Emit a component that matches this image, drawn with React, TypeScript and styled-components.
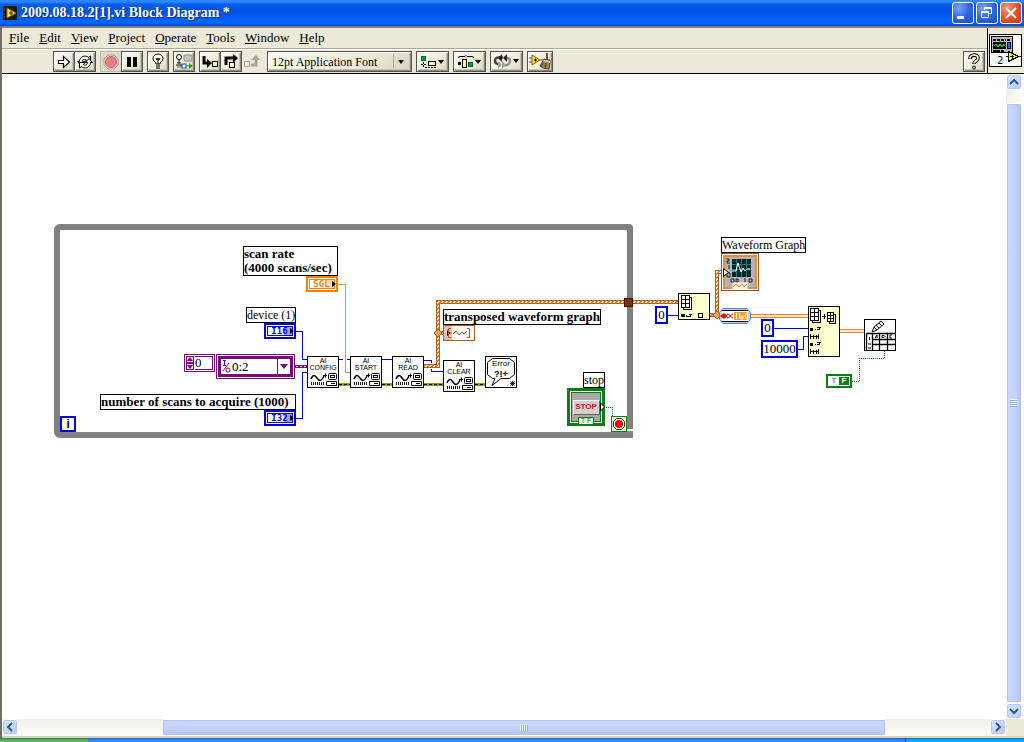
import React from "react";
import styled, { createGlobalStyle, css } from "styled-components";

const serif = '"Liberation Serif", "Times New Roman", serif';
const sans = '"Liberation Sans", Arial, sans-serif';
const face = "#ece9d8";
const blue = "#0000d8";
const purple = "#7a0a7a";
const orange = "#ff8000";
const brown = "#b45a1e";
const green = "#0a7d14";

/* Scroll offset of the diagram inside its pane. */
const scroll = { x: 2, y: 74 };

const GlobalStyle = createGlobalStyle`
  * { box-sizing: border-box; }
  body { margin: 0; background: ${face}; font-family: ${serif}; color: #000; }
  button, input, select { font: inherit; color: inherit; margin: 0; padding: 0; border: 0; background: none; }
  svg { display: block; flex: none; }
`;

const Frame = styled.div`
  display: flex;
  flex-direction: column;
  height: 100vh;
  overflow: hidden;
`;

const TitleBar = styled.header`
  display: flex;
  align-items: center;
  gap: 4px;
  flex: none;
  height: 26px;
  padding: 0 2px 0 3px;
  background: linear-gradient(#2f86f8 0, #2f86f8 2px, #0a5fee 4px, #0054e3 10px, #0058ee 16px, #0066ff 21px, #0060fa 24px, #003fc8 26px);
`;

const Title = styled.h1`
  flex: 1;
  margin: 0;
  font-size: 14px;
  line-height: 18px;
  font-weight: bold;
  color: #fff;
  text-shadow: 1px 1px 1px #0a2a80;
  white-space: nowrap;
`;

const CaptionButtons = styled.div`
  display: flex;
  gap: 2px;
`;

const CaptionButton = styled.button<{ $close?: boolean }>`
  width: 22px;
  height: 22px;
  border: 1px solid #fff;
  border-radius: 3px;
  background: ${(p) =>
    p.$close
      ? "radial-gradient(circle at 30% 25%, #f0a080, #e2522c 50%, #c23a14)"
      : "radial-gradient(circle at 30% 25%, #7ca4f4, #2f66e0 50%, #1a49c4)"};
`;

const Window = styled.main`
  display: flex;
  flex-direction: column;
  flex: 1;
  min-height: 0;
  border-top: 2px solid #827f76;
  border-left: 2px solid #716f64;
`;

const Bars = styled.div`
  display: flex;
  flex: none;
  height: 46px;
  background: ${face};
  border-bottom: 1px solid #000;
`;

const BarStack = styled.div`
  flex: 1;
  border-right: 1px solid #000;
`;

const MenuBar = styled.nav`
  display: flex;
  height: 21px;
  padding-left: 2px;
  border-bottom: 1px solid #aca899;
`;

const MenuItem = styled.button`
  padding: 0 5px;
  font-size: 13px;
  line-height: 20px;

  &::first-letter { text-decoration: underline; }
`;

const ToolBar = styled.div`
  display: flex;
  gap: 4px;
  height: 24px;
  padding: 1px 2px 0 51px;
  border-top: 1px solid #fff;
`;

const Group = styled.div`
  display: flex;

  > * + * { margin-left: -1px; }
`;

const raised = css`
  border: 1px solid #55534a;
  background: linear-gradient(135deg, #fbfaf2, #eeebd9 60%, #d8d5c4);
  box-shadow: inset 1px 1px #fff, inset -1px -1px #8f8c7e, inset -2px -2px #c6c3b2;
`;

const ToolButton = styled.button<{ $w?: number; $flat?: boolean; $dim?: boolean }>`
  display: flex;
  align-items: center;
  justify-content: center;
  flex: none;
  width: ${(p) => p.$w ?? 22}px;
  height: 21px;
  ${raised}
  ${(p) => p.$dim && css`border-color: #bdb9a8; background: #dfdbca; box-shadow: none;`}
  ${(p) => p.$flat && css`border-color: transparent; background: none; box-shadow: none;`}
`;

const FontPicker = styled.div`
  position: relative;
  width: 145px;
  height: 21px;
  ${raised}

  select {
    appearance: none;
    width: 100%;
    height: 19px;
    padding-left: 4px;
    font-size: 12px;
    outline: none;
  }

  svg {
    position: absolute;
    right: 1px;
    top: 1px;
    pointer-events: none;
  }
`;

const Spacer = styled.div`
  flex: 1;
`;

const IconPane = styled.div`
  display: flex;
  width: 36px;
  padding: 6px 0 0 1px;
`;

const Work = styled.div`
  display: grid;
  grid-template: minmax(0, 1fr) 17px / minmax(0, 1fr) 18px;
  flex: 1;
  min-height: 0;
  background: ${face};
  border-bottom: 2px solid #d6d2c2;
`;

const Canvas = styled.section`
  position: relative;
  overflow: hidden;
  background: #fff;
`;

const ScrollTrack = styled.div<{ $vertical?: boolean }>`
  display: flex;
  flex-direction: ${(p) => (p.$vertical ? "column" : "row")};
  padding: ${(p) => (p.$vertical ? "0 2px 0 0" : "0")};
  background: linear-gradient(${(p) => (p.$vertical ? "90deg" : "180deg")}, #f1f0e8, #fefefb);
`;

const ScrollButton = styled.button`
  display: flex;
  align-items: center;
  justify-content: center;
  flex: none;
  width: 16px;
  height: 16px;
  border: 1px solid #fff;
  border-radius: 3px;
  background: linear-gradient(135deg, #dbe6ff, #b5c9f8);
  box-shadow: inset 0 0 0 1px #b4c8f6;
`;

const Thumb = styled.div<{ $vertical?: boolean }>`
  display: flex;
  align-items: center;
  justify-content: center;
  min-width: 0;
  min-height: 0;
  border: 1px solid #fff;
  border-radius: 2px;
  background: linear-gradient(${(p) => (p.$vertical ? "90deg" : "180deg")}, #cbd9fe, #c4d2fb 60%, #b2c4f2);
  box-shadow: inset 0 0 0 1px #b0c3f2;
`;

const Span = styled.div<{ $grow: number }>`
  display: grid;
  flex: ${(p) => p.$grow} 1 0;
  min-width: 0;
  min-height: 0;
`;

const TaskBar = styled.footer`
  display: flex;
  flex: none;
  height: 4px;
  background: linear-gradient(#1f5fd0, #3a8af0 2px);
`;

const StartEdge = styled.div`
  width: 88px;
  background: linear-gradient(#2c7a2c, #5fb65f 2px);
`;

const TrayEdge = styled.div`
  width: 119px;
  margin-left: auto;
  border-left: 1px solid #0a3a90;
  background: linear-gradient(#0b6fc8, #16a8f0 2px);
`;

/* ---- Parts on the diagram ---- */

interface Place { $x: number; $y: number; $w?: number; $h?: number }

const Placed = styled.div<Place>`
  position: absolute;
  left: ${(p) => p.$x - scroll.x}px;
  top: ${(p) => p.$y - scroll.y}px;
  width: ${(p) => (p.$w ? `${p.$w}px` : "auto")};
  height: ${(p) => (p.$h ? `${p.$h}px` : "auto")};
`;

const WireLayer = styled.svg`
  position: absolute;
  inset: 0;
  width: 100%;
  height: 100%;
`;

const Loop = styled(Placed)`
  border: 6px solid #808080;
  border-radius: 6px 4px 0 6px;
`;

const Caption = styled(Placed)<{ $bold?: boolean }>`
  border: 1px solid #000;
  background: #fff;
  font-size: ${(p) => (p.$bold ? 13 : 12)}px;
  font-weight: ${(p) => (p.$bold ? "bold" : "normal")};
  line-height: 14px;
  white-space: nowrap;
`;

const Terminal = styled(Placed)<{ $color: string; $tint: string }>`
  display: flex;
  align-items: center;
  padding: 1px;
  border: 2px solid ${(p) => p.$color};
  background: #fff;
  color: ${(p) => p.$color};

  > span {
    flex: 1;
    height: 10px;
    padding-right: 1px;
    border: 1px solid ${(p) => p.$color};
    background: linear-gradient(90deg, transparent 65%, ${(p) => p.$tint} 65%);
    font: bold 9px/8px "DejaVu Sans Mono", monospace;
    text-align: center;
  }

  > svg { position: absolute; right: 0; top: 3px; }
`;

const Constant = styled(Placed)`
  border: 2px solid ${blue};
  background: #fff;

  input {
    display: block;
    width: 100%;
    height: 100%;
    font-size: 13px;
    text-align: center;
    outline: none;
  }
`;

const IndexBox = styled(Placed)`
  display: flex;
  gap: 1px;
  padding: 1px;
  border: 1px solid ${purple};
  background: #fff;

  input {
    flex: 1;
    min-width: 0;
    border: 1px solid ${purple};
    border-left: 0;
    font-size: 13px;
    outline: none;
  }
`;

const Spinner = styled.div`
  display: flex;
  flex-direction: column;
  justify-content: space-between;
  width: 8px;
  background: #f0d8f0;

  button {
    height: 7px;
    border: 1px solid ${purple};
  }
`;

const ChannelBox = styled(Placed)`
  padding: 1px;
  border: 1px solid ${purple};
  background: #fff;
`;

const ChannelInner = styled.div`
  display: flex;
  align-items: center;
  position: relative;
  height: 21px;
  border: 3px solid ${purple};

  select {
    appearance: none;
    width: 100%;
    height: 15px;
    padding-left: 11px;
    font-size: 13px;
    line-height: 15px;
    outline: none;
  }

  svg { position: absolute; top: 0; pointer-events: none; }
  svg:first-child { left: 1px; }
  svg:last-child { right: 0; }
`;

const StopTerminal = styled(Placed)`
  display: flex;
  align-items: center;
  justify-content: center;
  border: 3px solid ${green};
  background: #a8a8a8;
  box-shadow: inset 0 0 0 1px #fff, inset 0 0 0 2px ${green};

  button {
    width: 27px;
    height: 15px;
    border: 1px solid #777;
    border-color: #f4f4f4 #666 #666 #f4f4f4;
    background: #d4d0d0;
    color: #c8102c;
    font: bold 8px/12px ${sans};
  }
`;

const TypeTag = styled.span`
  position: absolute;
  bottom: -2px;
  left: 8px;
  width: 16px;
  height: 8px;
  border: 1px solid ${green};
  background: #e8fbe8;
  color: ${green};
  font: 7px/6px ${sans};
  text-align: center;
`;

const Counter = styled(Placed)`
  border: 2px solid ${blue};
  background: #ffffc8;
  color: ${blue};
  font: bold 13px/12px ${sans};
  text-align: center;
`;

const BoolConstant = styled(Placed)`
  display: grid;
  grid-template-columns: 1fr 1fr;
  padding: 1px;
  border: 2px solid ${green};
  background: #fff;
  color: #6aa86a;
  font: bold 8px/8px ${sans};
  text-align: center;

  b { background: ${green}; color: #fff; }
`;

/* ---- Drawings ---- */

const AppIcon = () => (
  <svg width="14" height="14" viewBox="0 0 14 14">
    <rect width="14" height="14" fill="#1a1a10" />
    <path d="M0 2h2M0 4h2M0 8h2M0 11h2" stroke="#d03020" />
    <path d="M4 2l9 5-9 5z" fill="#ffe83c" stroke="#8a6a00" />
    <path d="M6 7h4M8 5v4" stroke="#302000" />
  </svg>
);

const Drop = ({ x, y }: { x: number; y: number }) => <path d={`M${x} ${y}h6l-3 4z`} fill="#000" />;

const RunIcon = () => (
  <svg width="16" height="16" viewBox="0 0 16 16">
    <path d="M2.500 6.500h5V2.500l6 5.500-6 5.500v-4h-5z" fill="#fff" stroke="#000" strokeWidth="1.200" />
  </svg>
);

const RepeatIcon = () => (
  <svg width="18" height="16" viewBox="0 0 18 16" fill="#fff" stroke="#000">
    <path d="M1.500 7.500h2c0-5 6-7 9-4l2-1.500v6h-6l2-2c-2-1.500-4-.5-4 1.500h2l-3.500 4z" />
    <path d="M16.500 8.500h-2c0 5-6 7-9 4l-2 1.500V8.500h5.500l-1.500 2c2 1.500 4 .5 4-2h-2l3.500-4z" />
  </svg>
);

const AbortIcon = () => (
  <svg width="16" height="16" viewBox="0 0 16 16">
    <path d="M5 1h6l4 4v6l-4 4H5l-4-4V5z" fill="#f4cfc8" stroke="#b09a90" />
    <circle cx="8" cy="8" r="5.500" fill="#e88080" stroke="#b87070" />
  </svg>
);

const PauseIcon = () => (
  <svg width="12" height="12" viewBox="0 0 12 12"><path d="M1 1h4v10H1zM7 1h4v10H7z" /></svg>
);

const BulbIcon = () => (
  <svg width="14" height="17" viewBox="0 0 14 17" fill="none" stroke="#000">
    <path d="M5 11C5 9 2 8 2 5.500a5 4.500 0 0 1 10 0C12 8 9 9 9 11z" fill="#fffbe0" />
    <path d="M5 5l1 2 1-2 1 2 1-2M7 7v4M5 13h4M5 15h4" />
  </svg>
);

const RetainIcon = () => (
  <svg width="18" height="17" viewBox="0 0 18 17" fill="none">
    <circle cx="4" cy="4" r="2.500" stroke="#000" fill="#fff" />
    <path d="M4 6v4M1 12h6M2 10h4" stroke="#000" />
    <rect x="9" y="2" width="8" height="6" rx="1" fill="#c8c8c0" stroke="#888" />
    <path d="M2 14h4v-2M11 13h5" stroke="#18901c" />
    <rect x="7" y="11" width="4" height="4" stroke="#1040c0" fill="#fff" />
    <path d="M14 10l4 3-4 3z" fill="#20a020" />
  </svg>
);

const StepIntoIcon = () => (
  <svg width="17" height="15" viewBox="0 0 17 15">
    <path d="M2 2v7h5" fill="none" stroke="#000" strokeWidth="3" />
    <path d="M5 5l5 4-5 5z" />
    <rect x="10.500" y="7.500" width="5" height="5" fill="#ffffb0" stroke="#000" />
  </svg>
);

const StepOverIcon = () => (
  <svg width="17" height="16" viewBox="0 0 17 16">
    <path d="M3 11V4h8" fill="none" stroke="#000" strokeWidth="3" />
    <path d="M10 0l5 4-5 5z" />
    <rect x="6.500" y="8.500" width="5" height="5" fill="#ffffb0" stroke="#000" />
  </svg>
);

const StepOutIcon = () => (
  <svg width="18" height="15" viewBox="0 0 18 15">
    <rect x="1.500" y="7.500" width="5" height="5" fill="none" stroke="#a8a598" />
    <path d="M8 11h5V5" fill="none" stroke="#a8a598" strokeWidth="3" />
    <path d="M8 6l5-5 4 5z" fill="#a8a598" />
  </svg>
);

const AlignIcon = () => (
  <svg width="26" height="14" viewBox="0 0 26 14">
    <rect x="1.500" y="1.500" width="4" height="4" fill="#1a9a3a" stroke="#063" />
    <path d="M1 9.500h5M3.500 7v5M5 12.500h12" stroke="#000" strokeDasharray="2 1" />
    <rect x="8.500" y="6.500" width="7" height="4" fill="#ffffa0" stroke="#000" />
    <Drop x={18} y={5} />
  </svg>
);

const DistributeIcon = () => (
  <svg width="26" height="14" viewBox="0 0 26 14">
    <path d="M1 2.500l2-1h5l1-1 1 1h5l2 1" stroke="#000" fill="none" />
    <rect x="1" y="7" width="3" height="3" />
    <rect x="5.500" y="4.500" width="4" height="8" fill="#ffffa0" stroke="#000" />
    <rect x="11.500" y="7.500" width="4" height="4" fill="#1a9a3a" stroke="#063" />
    <Drop x={18} y={5} />
  </svg>
);

const ReorderIcon = () => (
  <svg width="28" height="15" viewBox="0 0 28 15">
    <path d="M10 3.500C5 2.500 2 4 2 6.500s1 3 4 4" fill="none" stroke="#444" strokeWidth="2.500" />
    <path d="M9 11c5 1 8-1 8-4 0-2-2-3-4-3" fill="none" stroke="#909088" strokeWidth="2.500" />
    <path d="M5 4l4-4v8zM10 4l4-4v8z" fill="#222" />
    <path d="M13 10.500L9 7v8zM9 10.500L5 7v8z" fill="#a0a098" />
    <Drop x={20} y={5} />
  </svg>
);

const CleanIcon = () => (
  <svg width="22" height="17" viewBox="0 0 22 17">
    <path d="M0 5h4M0 9h4M9 7h5" stroke="#8020a0" />
    <path d="M3 2l8 5-8 5z" fill="#ffe83c" stroke="#806000" />
    <path d="M5 7h3M6.500 5.500v3" stroke="#000" />
    <path d="M18 0v7" stroke="#7a4820" strokeWidth="2" />
    <path d="M15 6l6 1v3l-1 6c-4 0-7-1-9-3z" fill="#a08050" stroke="#58483a" />
    <path d="M15 7l6 1v2l-7-2z" fill="#d8d4c8" />
    <path d="M14 10l-2 4M17 10l-1 5" stroke="#40382c" />
  </svg>
);

const HelpIcon = () => (
  <svg width="14" height="17" viewBox="0 0 14 17" fill="none">
    <path d="M3 6c0-5 8-5 8-1 0 3-4 3-4 6" stroke="#000" strokeWidth="3.600" />
    <path d="M3 5.500c0-4.500 8-4.500 8-.5 0 3-4 3-4 5.500" stroke="#ffffc0" strokeWidth="1.600" />
    <circle cx="7" cy="14.500" r="1.500" fill="#ffffc0" stroke="#000" />
  </svg>
);

const ViIcon = () => (
  <svg width="33" height="33" viewBox="0 0 33 33" shapeRendering="crispEdges">
    <rect x="0.500" y="0.500" width="32" height="32" fill="#fff" stroke="#000" />
    <rect x="2.500" y="2.500" width="21" height="16" fill="#b8b8b8" stroke="#000" />
    <path d="M4 6h13M18 6h4M4 17h11M6 17h2" stroke="#000" strokeWidth="2" strokeDasharray="3 1" />
    <rect x="4" y="8" width="13" height="7" />
    <path d="M5 12l2-2 2 3 2-3 2 3 2-3 1 2" fill="none" stroke="#18c030" />
    <rect x="18.500" y="8.500" width="3" height="6" fill="#2a6ae0" stroke="#000" />
    <path d="M17 22.500h15" stroke="#000" />
    <path d="M19.500 17.500l10 5-10 5z" fill="#ffff20" stroke="#000" />
    <path d="M21 22.500h4M23 20.500v4" stroke="#000" />
    <text x="8" y="30" fontSize="10" fontFamily="DejaVu Sans, sans-serif">2</text>
  </svg>
);

const Arrow = ({ d }: { d: string }) => (
  <svg width="10" height="10" viewBox="0 0 10 10"><path d={d} fill="none" stroke="#3c5488" strokeWidth="2" /></svg>
);

const Grip = ({ vertical }: { vertical?: boolean }) => (
  <svg width="8" height="8" viewBox="0 0 8 8">
    <g transform={vertical ? "rotate(90 4 4)" : undefined}>
      <path d="M0.500 0v7M2.500 0v7M4.500 0v7M6.500 0v7" stroke="#f2f6ff" />
      <path d="M1.500 1v7M3.500 1v7M5.500 1v7M7.500 1v7" stroke="#98aedc" />
    </g>
  </svg>
);

const DaqIcon = ({ name }: { name: string }) => (
  <svg width="32" height="32" viewBox="0 0 32 32">
    <rect x="0.500" y="0.500" width="31" height="31" fill="#fff" stroke="#000" />
    <g fontFamily="Liberation Sans, Arial, sans-serif" fontSize="7" textAnchor="middle">
      <text x="16" y="7">AI</text>
      <text x="16" y="14">{name}</text>
    </g>
    <path d="M4 23c2-5 4-4 6-1s4 4 7-2" fill="none" stroke="#000" strokeWidth="1.500" />
    <path d="M4.500 26v3M6.500 26v3M8.500 26v3M10.500 26v3M12.500 26v3M14.500 26v3M16.500 26v3" stroke="#000" strokeWidth="0.900" />
    <path d="M16 19.500h4M18.500 17.500v4" stroke="#000" />
    <rect x="21.500" y="17.500" width="8" height="6" rx="1" fill="#fff" stroke="#000" />
    <rect x="23.500" y="19.500" width="4" height="2" fill="none" stroke="#000" />
    <path d="M19.500 25.500h10v4h-10zM24 27.500h4" fill="none" stroke="#000" />
  </svg>
);

const ErrorIcon = () => (
  <svg width="32" height="32" viewBox="0 0 32 32">
    <rect x="0.500" y="0.500" width="31" height="31" fill="#fff" stroke="#000" />
    <path d="M7.500 2.500h17l5 4v12l-5 4H16l-9 7 3-7H7.500l-5-4v-12z" fill="#fff" stroke="#000" />
    <g fontFamily="Liberation Sans, Arial, sans-serif" textAnchor="middle">
      <text x="16" y="10" fontSize="8">Error</text>
      <text x="16" y="21" fontSize="9" fontWeight="bold">?!+</text>
    </g>
    <path d="M25 27.500h5M27.500 25v5M25.500 25.500l4 4M29.500 25.500l-4 4" stroke="#000" strokeWidth="0.800" />
  </svg>
);

const Cells = ({ x, y, s }: { x: number; y: number; s: number }) => (
  <g fill="#fff" stroke="#000">
    <rect x={x + 2.5} y={y + 2.5} width={s * 2} height={s * 3} />
    <rect x={x + 0.5} y={y + 0.5} width={s * 2} height={s * 3} />
    <path d={`M${x + s + 0.5} ${y}v${s * 3}M${x} ${y + s + 0.5}h${s * 2}M${x} ${y + 2 * s + 0.5}h${s * 2}`} />
  </g>
);

const IndexArrayIcon = () => (
  <svg width="32" height="27" viewBox="0 0 32 27" shapeRendering="crispEdges">
    <rect x="0.500" y="0.500" width="31" height="26" fill="#ffffd0" stroke="#000" />
    <Cells x={3} y={2} s={4} />
    <path d="M3 21h4v3H3zM8 22h1v2H8z" />
    <path d="M9 23.500h3v-3M10.500 21.500h3" stroke="#000" fill="none" />
    <rect x="20.500" y="20.500" width="4" height="4" fill="#fff" stroke="#000" />
  </svg>
);

const SubsetIcon = () => (
  <svg width="32" height="51" viewBox="0 0 32 51" shapeRendering="crispEdges">
    <rect x="0.500" y="0.500" width="31" height="50" fill="#ffffd0" stroke="#000" />
    <Cells x={2} y={2} s={4} />
    <Cells x={19} y={6} s={3} />
    <path d="M14 10.500h4M16.500 8v5" stroke="#000" />
    {[23, 38].map((y) => (
      <g key={y} fill="none" stroke="#000">
        <path d={`M2 ${y}h3`} strokeWidth="3" />
        <path d={`M7 ${y}.5h1M9 ${y}.5h2v-3M9 ${y - 2}h4`} />
        <path d={`M2.500 ${y + 5}v5M10.500 ${y + 5}v5M3 ${y + 7}.5h7M5.500 ${y + 6}v4M8.500 ${y + 6}v4`} />
      </g>
    ))}
  </svg>
);

const SpreadsheetIcon = () => (
  <svg width="32" height="32" viewBox="0 0 32 32">
    <rect x="0.500" y="0.500" width="31" height="31" fill="#fff" stroke="#000" />
    <path d="M8 13l2-5 7-6 3 3-7 6zM10 8l3 3M12 6l3 3M15 4l3 3" fill="#fff" stroke="#000" />
    <path d="M2.500 14.500h29M2.500 14.500v17M8.500 14.500v17M8 20.500h23M8 25.500h23M15.500 14v17M23.500 14v17" fill="none" stroke="#000" strokeWidth="1.300" />
    <path d="M11 19l2-3v3M18 16.500h2l1 1-1 1h-2zM28 16h-2v3h2M5.500 18v3M4 25h3M4 29h3" fill="none" stroke="#000" />
  </svg>
);

const GraphIcon = () => (
  <svg width="38" height="38" viewBox="0 0 38 38">
    <rect x="0.500" y="0.500" width="37" height="37" fill="#fff" stroke="#a05020" />
    <rect x="3" y="3" width="32" height="32" fill="#b4b4b4" stroke="#e88a40" strokeWidth="2" />
    <rect x="11" y="6" width="19" height="18" fill="#06282c" />
    <path d="M15.500 6v18M20.500 6v18M25.500 6v18M11 11.500h19M11 16.500h19" stroke="#2a7a80" />
    <path d="M11 18h4l2-8 3 9 2-4 2 3 2-2 3 0" fill="none" stroke="#fff" />
    <path d="M5 6h3v2H6v2h3M8 12v4M6 20h3v4H6zM10 26h3v3h-3zM15 26h2v3h-2zM24 25v4M28 26h3v3h-3z" fill="none" stroke="#222" />
    <path d="M2.500 15.500l5 4-5 4z" fill="#fff" stroke="#000" />
    <rect x="12" y="30" width="14" height="6" fill="#fff0dc" stroke="#fff" />
    <path d="M12 34l3-3 3 3 3-3 2 3 3-3" fill="none" stroke="#f08c30" />
  </svg>
);

const ConvertIcon = () => (
  <svg width="32" height="16" viewBox="0 0 32 16">
    <path d="M4 0.500h24l3.500 4v7l-3.500 4H4l-3.500-4v-7z" fill="#bcd8f4" stroke="#4a86c8" />
    <rect x="3" y="3" width="26" height="10" fill="#fff" />
    <path d="M3 2.500h26M3 13.500h26" stroke="#000" />
    <path d="M5 5l4 3-4 3-4-3z" fill="#f01010" />
    <path d="M8 6c3 0 4 4 6 4M8 10c3 0 4-4 6-4" fill="none" stroke="#601818" />
    <path d="M15 4h13v8H15z" fill="#ff9a30" />
    <path d="M17.500 5v6M20.500 5v6M22 8h2v3h-2zM27 5l-1 3 1 3" fill="none" stroke="#fff" />
  </svg>
);

const ArrayTerminalIcon = () => (
  <svg width="32" height="16" viewBox="0 0 32 16">
    <rect x="0.500" y="0.500" width="31" height="15" fill="#fff" stroke={brown} />
    <rect x="1" y="1" width="8" height="14" fill="#e0c0b4" />
    <path d="M4 5l4 3-4 3z" />
    <path d="M8 3.500H5.500v9H8M24 3.500h2.500v9H24M10 9l3-3 3 4 3-3 2 2 3-3" fill="none" stroke={brown} />
  </svg>
);

const StopConditionIcon = () => (
  <svg width="16" height="16" viewBox="0 0 16 16">
    <rect x="0.500" y="0.500" width="15" height="15" fill="#e8f8c8" stroke={green} />
    <path d="M5.500 2.500h5l3 3v5l-3 3h-5l-3-3v-5z" fill="#fff" stroke="#333" />
    <circle cx="8" cy="8" r="4" fill="#f00000" />
  </svg>
);

const InputArrow = () => (
  <svg width="5" height="6" viewBox="0 0 5 6"><path d="M1 0l4 3-4 3z" fill="#000" /></svg>
);

const arrayWires = [
  "M424 366H438V302H678",
  "M438 333H443",
  "M710 315H720",
  "M717 315V272H723",
];

const Wires = () => (
  <WireLayer shapeRendering="crispEdges" aria-hidden="true">
    <defs>
      <pattern id="hatch" width="4" height="4" patternUnits="userSpaceOnUse">
        <rect width="4" height="4" fill="#e08030" />
        <path d="M0 3h1v1H0zM1 2h1v1H1zM2 1h1v1H2zM3 0h1v1H3zM1 3h1v1H1zM2 2h1v1H2zM3 1h1v1H3zM0 0h1v1H0z" fill="#fff" />
      </pattern>
    </defs>
    <g transform={`translate(${-scroll.x} ${-scroll.y})`} fill="none">
      <g stroke={blue}>
        <path d="M295 331.500H302.500V359.500H307M295 418.500H302.500V372.500H307M339 359.500H343M347 359.500H350M382 359.500H392M424 360.500H431.500V363M431.500 369V371.500H443" />
        <path d="M667 315.500H678M773 328.500H808M797 349.500H803.500V336.500H808" />
      </g>
      <path d="M337 284.500H345.500V372.500H350" stroke="#f09030" />
      <path d="M751 316H808M840 331H864" stroke="#f08030" strokeWidth="4" />
      <path d="M751 316H808M840 331H864" stroke="#ffe8d0" strokeWidth="2" />
      <g strokeWidth="3">
        <path d="M339 384.500H350M382 384.500H392M424 384.500H443M475 384.500H485" stroke="#9a9a00" />
        <path d="M339 384.500H350M382 384.500H392M424 384.500H443M475 384.500H485" stroke="#000" strokeWidth="1" strokeDasharray="3 2" />
        <path d="M295 366.500H307" stroke={purple} />
        <path d="M296 366.500H307" stroke="#fff" strokeWidth="1" strokeDasharray="2 2" />
      </g>
      {arrayWires.map((d) => (
        <g key={d}>
          <path d={d} stroke="#b85c14" strokeWidth="4" />
          <path d={d} stroke="url(#hatch)" strokeWidth="2" />
        </g>
      ))}
      <path d="M438 329l4 4-4 4-4-4zM717 311l4 4-4 4-4-4z" fill="#f0a050" stroke="#b85c14" />
      <path d="M624.500 298.500h8v8h-8z" fill="#7a3008" stroke="#401800" />
      <path d="M604 407.500H612.500V416M852 381.500H859.500V358.500H884.500V351" stroke={green} strokeDasharray="1 1" />
      <path d="M627 430h6" stroke="#fff" strokeWidth="2" />
    </g>
  </WireLayer>
);

const Diagram = () => (
  <Canvas aria-label="Block diagram">
    <Loop $x={54} $y={224} $w={579} $h={214} />
    <Wires />

    <Caption $bold $x={243} $y={246} $w={95}>scan rate<br />(4000 scans/sec)</Caption>
    <Terminal $x={306} $y={276} $w={32} $h={16} $color={orange} $tint="#ffdcb8"><span>SGL</span><InputArrow /></Terminal>
    <Caption $x={246} $y={307} $w={50}>device (1)</Caption>
    <Terminal $x={264} $y={323} $w={32} $h={16} $color={blue} $tint="#a0a0f0"><span>I16</span><InputArrow /></Terminal>
    <Caption $bold $x={100} $y={394} $w={196}>number of scans to acquire (1000)</Caption>
    <Terminal $x={264} $y={410} $w={32} $h={16} $color={blue} $tint="#a0a0f0"><span>I32</span><InputArrow /></Terminal>

    <IndexBox $x={184} $y={354} $w={31} $h={18}>
      <Spinner>
        <button aria-label="Increment index"><svg width="6" height="5" viewBox="0 0 6 5"><path d="M3 0l3 4H0z" fill={purple} /></svg></button>
        <button aria-label="Decrement index"><svg width="6" height="5" viewBox="0 0 6 5"><path d="M3 5L0 1h6z" fill={purple} /></svg></button>
      </Spinner>
      <input aria-label="Channel index" defaultValue="0" />
    </IndexBox>
    <ChannelBox $x={216} $y={354} $w={79} $h={25}>
      <ChannelInner>
        <svg width="9" height="15" viewBox="0 0 9 15" fill="none" stroke={purple}>
          <path d="M1 1.500h3M2.500 1v5M1 6.500h3M1 12l6-8" /><circle cx="6" cy="11" r="2" />
        </svg>
        <select aria-label="Channel" defaultValue="0:2"><option>0:2</option></select>
        <svg width="13" height="15" viewBox="0 0 13 15"><path d="M0.500 0v15" stroke={purple} /><path d="M3 5h8l-4 5z" fill={purple} /></svg>
      </ChannelInner>
    </ChannelBox>

    <Placed $x={307} $y={356}><DaqIcon name="CONFIG" /></Placed>
    <Placed $x={350} $y={356}><DaqIcon name="START" /></Placed>
    <Placed $x={392} $y={356}><DaqIcon name="READ" /></Placed>
    <Placed $x={443} $y={360}><DaqIcon name="CLEAR" /></Placed>
    <Placed $x={485} $y={356}><ErrorIcon /></Placed>

    <Caption $bold $x={443} $y={309} $w={158}>transposed waveform graph</Caption>
    <Placed $x={443} $y={325}><ArrayTerminalIcon /></Placed>

    <Caption $x={583} $y={372} $w={22}>stop</Caption>
    <StopTerminal $x={567} $y={388} $w={38} $h={38}>
      <button>STOP</button>
      <TypeTag>T F</TypeTag>
    </StopTerminal>
    <Placed $x={600} $y={402}>
      <svg width="6" height="10" viewBox="0 0 6 10"><path d="M0.500 1l4 4-4 4z" fill="#fff" stroke="#000" /></svg>
    </Placed>
    <Placed $x={611} $y={416}><StopConditionIcon /></Placed>
    <Counter $x={60} $y={416} $w={16} $h={16}>i</Counter>

    <Constant $x={655} $y={306} $w={13} $h={18}><input aria-label="Array index" defaultValue="0" /></Constant>
    <Placed $x={678} $y={293}><IndexArrayIcon /></Placed>
    <Caption $x={721} $y={237} $w={85}>Waveform Graph</Caption>
    <Placed $x={721} $y={253}><GraphIcon /></Placed>
    <Placed $x={719} $y={308}><ConvertIcon /></Placed>
    <Constant $x={761} $y={319} $w={13} $h={18}><input aria-label="Subset start" defaultValue="0" /></Constant>
    <Constant $x={761} $y={340} $w={37} $h={18}><input aria-label="Subset length" defaultValue="10000" /></Constant>
    <Placed $x={808} $y={306}><SubsetIcon /></Placed>
    <Placed $x={864} $y={319}><SpreadsheetIcon /></Placed>
    <BoolConstant $x={826} $y={374} $w={26} $h={14}><span>T</span><b>F</b></BoolConstant>
  </Canvas>
);

const menus = ["File", "Edit", "View", "Project", "Operate", "Tools", "Window", "Help"];

export default function App() {
  return (
    <Frame>
      <GlobalStyle />
      <TitleBar>
        <AppIcon />
        <Title>2009.08.18.2[1].vi Block Diagram *</Title>
        <CaptionButtons>
          <CaptionButton aria-label="Minimize">
            <svg width="20" height="20" viewBox="0 0 20 20"><path d="M4 13h7v3H4z" fill="#fff" /></svg>
          </CaptionButton>
          <CaptionButton aria-label="Restore">
            <svg width="20" height="20" viewBox="0 0 20 20" fill="none" stroke="#fff">
              <path d="M7.500 7V4.500h7v6H12M7 5.500h8M4.500 8.500h7v6h-7zM4 9.500h8" />
            </svg>
          </CaptionButton>
          <CaptionButton $close aria-label="Close">
            <svg width="20" height="20" viewBox="0 0 20 20"><path d="M5 5l10 10M15 5L5 15" stroke="#fff" strokeWidth="2" /></svg>
          </CaptionButton>
        </CaptionButtons>
      </TitleBar>
      <Window>
        <Bars>
          <BarStack>
            <MenuBar>{menus.map((m) => <MenuItem key={m}>{m}</MenuItem>)}</MenuBar>
            <ToolBar>
              <Group>
                <ToolButton aria-label="Run"><RunIcon /></ToolButton>
                <ToolButton aria-label="Run continuously"><RepeatIcon /></ToolButton>
              </Group>
              <Group>
                <ToolButton $dim aria-label="Abort"><AbortIcon /></ToolButton>
                <ToolButton aria-label="Pause"><PauseIcon /></ToolButton>
              </Group>
              <ToolButton aria-label="Highlight execution"><BulbIcon /></ToolButton>
              <ToolButton aria-label="Retain wire values"><RetainIcon /></ToolButton>
              <Group>
                <ToolButton aria-label="Step into"><StepIntoIcon /></ToolButton>
                <ToolButton aria-label="Step over"><StepOverIcon /></ToolButton>
                <ToolButton $flat aria-label="Step out"><StepOutIcon /></ToolButton>
              </Group>
              <FontPicker>
                <select aria-label="Font" defaultValue="12pt Application Font"><option>12pt Application Font</option></select>
                <svg width="17" height="17" viewBox="0 0 17 17"><path d="M0.500 1v14" stroke="#aca899" /><Drop x={5} y={7} /></svg>
              </FontPicker>
              <ToolButton $w={33} aria-label="Align objects"><AlignIcon /></ToolButton>
              <ToolButton $w={33} aria-label="Distribute objects"><DistributeIcon /></ToolButton>
              <ToolButton $w={33} aria-label="Reorder"><ReorderIcon /></ToolButton>
              <ToolButton $w={26} aria-label="Clean up diagram"><CleanIcon /></ToolButton>
              <Spacer />
              <ToolButton aria-label="Context help"><HelpIcon /></ToolButton>
            </ToolBar>
          </BarStack>
          <IconPane><ViIcon /></IconPane>
        </Bars>
        <Work>
          <Diagram />
          <ScrollTrack $vertical>
            <ScrollButton aria-label="Scroll up"><Arrow d="M1 7l4-4 4 4" /></ScrollButton>
            <Span $grow={13} />
            <Span $grow={599}><Thumb $vertical><Grip vertical /></Thumb></Span>
            <ScrollButton aria-label="Scroll down"><Arrow d="M1 3l4 4 4-4" /></ScrollButton>
          </ScrollTrack>
          <ScrollTrack>
            <ScrollButton aria-label="Scroll left"><Arrow d="M7 1L3 5l4 4" /></ScrollButton>
            <Span $grow={144} />
            <Span $grow={723}><Thumb><Grip /></Thumb></Span>
            <Span $grow={104} />
            <ScrollButton aria-label="Scroll right"><Arrow d="M3 1l4 4-4 4" /></ScrollButton>
          </ScrollTrack>
        </Work>
      </Window>
      <TaskBar><StartEdge /><TrayEdge /></TaskBar>
    </Frame>
  );
}
